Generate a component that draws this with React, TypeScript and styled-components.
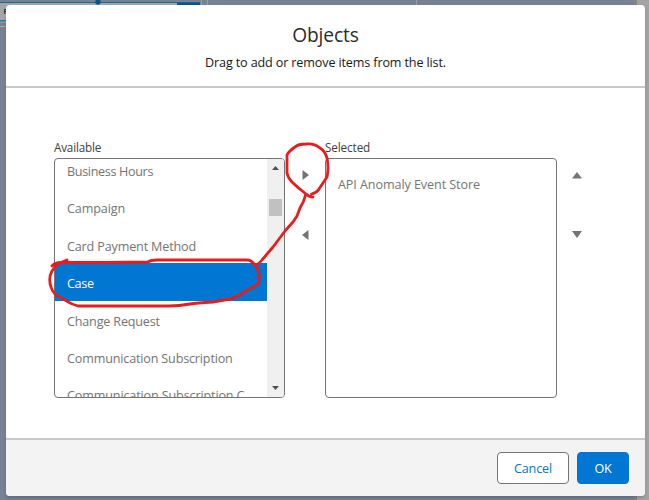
import React from "react";
import styled, { createGlobalStyle } from "styled-components";

const GlobalStyle = createGlobalStyle`
  * { box-sizing: border-box; }
  body { margin: 0; overflow: hidden; font-family: "Open Sans", "Noto Sans", sans-serif; }
`;

const Page = styled.div`
  position: relative;
  width: 649px;
  height: 500px;
  padding: 5px 4px 4px 6px;
  background: #748294;
  overflow: hidden;
`;

const Backdrop = styled.svg`
  position: absolute;
  inset: 0;
`;

const Modal = styled.section`
  position: relative;
  display: flex;
  flex-direction: column;
  width: 639px;
  height: 491px;
  border-radius: 4px;
  background: #fff;
  box-shadow: 0 2px 3px rgba(0, 0, 0, 0.16);
  overflow: hidden;
`;

const Header = styled.header`
  height: 83px;
  padding-top: 16px;
  border-bottom: 2px solid #c9c9c9;
  text-align: center;
  color: #181818;
`;

const Label = styled.span<{ $spacing?: number }>`
  letter-spacing: ${(p) => p.$spacing ?? 0}px;
  white-space: nowrap;
`;

const Title = styled.h2`
  margin: 0;
  font-size: 19.2px;
  line-height: 28px;
  font-weight: 400;
  color: #2b2b2b;
`;

const Subtitle = styled.p`
  margin: 4px 0 0;
  font-size: 12.6px;
  line-height: 20px;
`;

const Body = styled.main`
  display: flex;
  height: 350px;
  padding: 50px 0 0 48px;
`;

const Column = styled.div<{ $width: number }>`
  width: ${(p) => p.$width}px;
`;

const ListTitle = styled.div`
  height: 20px;
  font-size: 11.7px;
  line-height: 19px;
  color: #3e3e3c;
`;

const ListBox = styled.div`
  display: flex;
  height: 240px;
  border: 1px solid #747474;
  border-radius: 4px;
  overflow: hidden;
`;

const Options = styled.ul<{ $scrolled?: boolean }>`
  flex: 1;
  min-width: 0;
  margin: ${(p) => (p.$scrolled ? -8 : 5)}px 0 0;
  padding: 0;
  list-style: none;
`;

const Option = styled.li<{ $active?: boolean }>`
  height: 37.4px;
  padding-left: 12px;
  font-size: 12.6px;
  line-height: 41px;
  white-space: nowrap;
  color: ${(p) => (p.$active ? "#fff" : "#747474")};
  background: ${(p) => (p.$active ? "#0176d3" : "transparent")};
`;

const Scrollbar = styled.div`
  display: flex;
  flex-direction: column;
  align-items: center;
  width: 17px;
  padding: 7px 0 7px;
  background: #f0f0f0;
`;

const Thumb = styled.div`
  width: 13px;
  height: 17px;
  margin: 29px 0 auto;
  background: #c1c1c1;
`;

const Controls = styled.div<{ $top: number; $gap: number }>`
  display: flex;
  flex-direction: column;
  align-items: center;
  width: 40px;
  padding-top: ${(p) => p.$top}px;
  gap: ${(p) => p.$gap}px;
`;

const Footer = styled.footer`
  display: flex;
  justify-content: flex-end;
  gap: 8px;
  height: 58px;
  padding: 12px 16px 0;
  border-top: 2px solid #c9c9c9;
  background: #f3f3f3;
`;

const Button = styled.button<{ $primary?: boolean }>`
  width: ${(p) => (p.$primary ? 52 : 72)}px;
  height: 32px;
  padding: 1px 0 0;
  border: 1px solid ${(p) => (p.$primary ? "#0176d3" : "#747474")};
  border-radius: 4px;
  background: ${(p) => (p.$primary ? "#0176d3" : "#fff")};
  color: ${(p) => (p.$primary ? "#fff" : "#0176d3")};
  font: 400 12.6px "Open Sans", sans-serif;
`;

const Markup = styled.svg`
  position: absolute;
  inset: 0;
  pointer-events: none;
`;

const ArrowIcon = styled.svg`
  display: block;
  flex: none;
`;

const arrows = {
  right: { w: 7, h: 10, d: "M0.500 0L7 5L0.500 10Z" },
  left: { w: 7, h: 10, d: "M6.500 0L0 5L6.500 10Z" },
  up: { w: 10, h: 7, d: "M0 6.500L5 0L10 6.500Z" },
  down: { w: 10, h: 7, d: "M0 0L5 7L10 0Z" },
  scrollUp: { w: 7, h: 4, d: "M0 4L3.5 0L7 4Z" },
  scrollDown: { w: 7, h: 4, d: "M0 0L3.5 4L7 0Z" },
};

const Arrow = ({ kind }: { kind: keyof typeof arrows }) => {
  const a = arrows[kind];
  return (
    <ArrowIcon width={a.w} height={a.h}>
      <path d={a.d} fill={kind.startsWith("scroll") ? "#505050" : "#747474"} />
    </ArrowIcon>
  );
};

const available = [
  { text: "Business Hours", spacing: -0.34 },
  { text: "Campaign", spacing: -0.13 },
  { text: "Card Payment Method", spacing: -0.16 },
  { text: "Case", spacing: -0.35, active: true },
  { text: "Change Request", spacing: -0.18 },
  { text: "Communication Subscription", spacing: -0.17 },
  { text: "Communication Subscription C", spacing: -0.14 },
];

export default function App() {
  return (
    <Page>
      <GlobalStyle />
      <Backdrop width="649" height="500">
        <rect x="0" y="2" width="200" height="1" fill="#1a6798" />
        <rect x="0" y="3" width="200" height="17" fill="#a3a5a8" />
        <rect x="177" y="3" width="23" height="3" fill="#07558b" />
        <rect x="0" y="20" width="8" height="1" fill="#2380ad" />
        <rect x="0" y="22" width="8" height="1" fill="#8995a5" />
        <rect x="0" y="26" width="8" height="1" fill="#a2a8b1" />
        <circle cx="98" cy="2" r="2.7" fill="#075487" />
        <path d="M201.5 0V5M207.5 0V5M416.5 0V5" stroke="#97a0aa" />
        <rect x="634" y="0" width="3" height="500" fill="#858585" />
        <rect x="637" y="0" width="12" height="500" fill="#a3a3a3" />
        <text x="3.5" y="14" fontSize="7" fontWeight="700" fill="#303030">F</text>
      </Backdrop>
      <Modal>
        <Header>
          <Title><Label $spacing={-0.12}>Objects</Label></Title>
          <Subtitle><Label $spacing={-0.14}>Drag to add or remove items from the list.</Label></Subtitle>
        </Header>
        <Body>
          <Column $width={231}>
            <ListTitle><Label $spacing={-0.19}>Available</Label></ListTitle>
            <ListBox>
              <Options $scrolled>
                {available.map((item) => (
                  <Option key={item.text} $active={item.active}>
                    <Label $spacing={item.spacing}>{item.text}</Label>
                  </Option>
                ))}
              </Options>
              <Scrollbar>
                <Arrow kind="scrollUp" />
                <Thumb />
                <Arrow kind="scrollDown" />
              </Scrollbar>
            </ListBox>
          </Column>
          <Controls $top={32} $gap={50}>
            <Arrow kind="right" />
            <Arrow kind="left" />
          </Controls>
          <Column $width={232}>
            <ListTitle><Label $spacing={-0.1}>Selected</Label></ListTitle>
            <ListBox>
              <Options>
                <Option><Label $spacing={-0.09}>API Anomaly Event Store</Label></Option>
              </Options>
            </ListBox>
          </Column>
          <Controls $top={34} $gap={52}>
            <Arrow kind="up" />
            <Arrow kind="down" />
          </Controls>
        </Body>
        <Footer>
          <Button><Label $spacing={-0.15}>Cancel</Label></Button>
          <Button $primary><Label $spacing={-0.2}>OK</Label></Button>
        </Footer>
      </Modal>
      <Markup width="649" height="500" fill="none" stroke="#e71d1d" strokeWidth="2.8" strokeLinecap="round" strokeLinejoin="round">
        <path d="M311.500 194C315 193 318 191 319 189L323 183L327 177Q329 168 327 158Q325 151 320 148Q314 143 306 144Q298 144 295 147Q289 151 287 155L287 173Q288 178 292 182Q298 188 306 194Q309 197 313 197" />
        <path d="M305.500 195Q304 202 300 208L297 216L293 222L285 231L273 247L262 260Q258 265 255 264.500" />
        <path d="M52 266Q55 262.500 61 262.500L107 262.500L148 262Q151 260 157 260L247 260Q251 260 255 265Q260 271 259 280Q259 284 255 286L246 291Q236 298 230 299L213 302Q196 303 190 304Q179 306 169 306L78 306Q68 303 62 298Q53 295 51 287Q48 278 52 271Q55 266 60 263L67 260M255 265L259 271" />
      </Markup>
    </Page>
  );
}
